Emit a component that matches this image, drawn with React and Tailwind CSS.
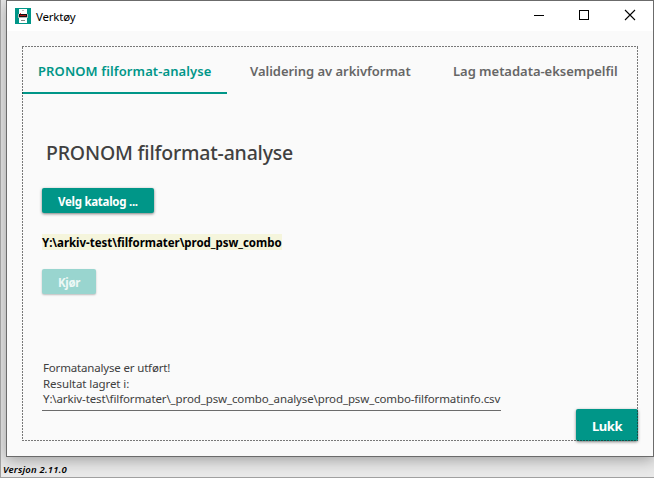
import React from 'react';

const tabs = [
  { label: 'PRONOM filformat-analyse', box: 'w-[205px] pl-4 text-[#009688] border-[#009688]', text: 'tracking-[0.1px]' },
  { label: 'Validering av arkivformat', box: 'w-[203px] pl-[23px] text-[#666666] border-transparent', text: 'tracking-[-0.03px]' },
  { label: 'Lag metadata-eksempelfil', box: 'w-[208px] pl-[23px] text-[#666666] border-transparent', text: 'tracking-[-0.03px]' },
];

function AppIcon() {
  return (
    <svg width="16" height="16" viewBox="0 0 16 16" shapeRendering="crispEdges">
      <rect width="16" height="16" fill="#009688" />
      <rect x="4" y="1" width="8" height="5" fill="#fff" />
      <rect x="7" y="2" width="2" height="1" fill="#bbb" />
      <rect x="5" y="5" width="1" height="1" fill="#e33" />
      <rect x="3" y="6" width="10" height="4" fill="#b9b9b9" />
      <rect x="4" y="6" width="8" height="3" fill="#111" />
      <rect x="5" y="7" width="6" height="1" fill="#b51616" />
      <rect x="4" y="10" width="8" height="5" fill="#fff" />
      <rect x="6" y="12" width="4" height="1" fill="#888" />
    </svg>
  );
}

function TitleBar() {
  return (
    <header className="flex h-[30px] shrink-0 items-center bg-white pl-2">
      <AppIcon />
      <span className="ml-[5px] pt-px text-[11.5px] leading-[16px] tracking-[-0.2px] text-black">Verktøy</span>
      <div className="ml-auto flex items-center text-black">
        <svg width="46" height="30" viewBox="0 0 46 30" shapeRendering="crispEdges">
          <path d="M19 14.5h10" stroke="currentColor" />
        </svg>
        <svg width="46" height="30" viewBox="0 0 46 30" shapeRendering="crispEdges">
          <rect x="18.5" y="9.5" width="9" height="9" fill="none" stroke="currentColor" />
        </svg>
        <svg width="46" height="30" viewBox="0 0 46 30">
          <path d="M18 9l10 10M28 9l-10 10" stroke="currentColor" strokeWidth="1.1" />
        </svg>
      </div>
    </header>
  );
}

export default function App() {
  return (
    <div className="flex h-[478px] w-[654px] flex-col overflow-hidden border-b border-l border-[#a0a0a0] bg-[#e9e9e9] pl-[5px] font-['Noto_Sans','Open_Sans',sans-serif]">
      <div className="flex h-[457px] w-[648px] shrink-0 flex-col border border-[#6b6b6b] bg-[#fafafa] shadow-[0_3px_14px_rgba(0,0,0,0.32)]">
        <TitleBar />
        <main className="relative mt-[15px] ml-[15px] flex h-[395px] w-[616px] flex-col">
          <nav className="flex h-[48px] shrink-0">
            {tabs.map((t) => (
              <div key={t.label} className={`${t.box} flex items-center border-b-2 pt-[4px]`}>
                <span className={`${t.text} text-[13px] leading-[20px] font-semibold whitespace-nowrap`}>{t.label}</span>
              </div>
            ))}
          </nav>
          <section className="flex shrink-0 flex-col items-start pl-5">
            <h1 className="mt-[45px] ml-1 text-[19.5px] leading-[28px] font-medium tracking-[-0.19px] whitespace-nowrap text-[#404040]">PRONOM filformat-analyse</h1>
            <button className="mt-[21px] h-[25px] w-[112px] rounded-[2px] bg-[#009688] pt-px pl-4 text-left text-[11.5px] leading-[26px] font-bold tracking-[-0.28px] whitespace-nowrap text-white shadow-[0_1px_3px_rgba(0,0,0,0.5)]">Velg katalog ...</button>
            <div className="mt-[21px] h-[16px] w-[240px] bg-[#f5f5dc] text-[11.5px] leading-[17px] font-bold tracking-[-0.04px] whitespace-nowrap text-black">Y:\arkiv-test\filformater\prod_psw_combo</div>
            <button className="mt-[19px] h-[25px] w-[54px] rounded-[2px] bg-[#99d5cf] pt-px pl-4 text-left text-[11.5px] leading-[26px] font-bold tracking-[-0.3px] text-[#edf8f6] shadow-[0_1px_2px_rgba(0,0,0,0.25)]">Kjør</button>
            <div className="mt-[66px] flex h-[51px] w-[459px] flex-col border-b border-[#6b6b6b] pl-px text-[11.5px] whitespace-nowrap text-[#404040]">
              <span className="leading-[16px] tracking-[-0.17px]">Formatanalyse er utført!</span>
              <span className="leading-[15px] tracking-[-0.08px]">Resultat lagret i:</span>
              <span className="leading-[16px] tracking-[-0.12px]">Y:\arkiv-test\filformater\_prod_psw_combo_analyse\prod_psw_combo-filformatinfo.csv</span>
            </div>
          </section>
          <button className="-mt-[2px] ml-auto h-[32px] w-[62px] shrink-0 rounded-[2px] bg-[#009688] pl-4 text-left text-[13px] leading-[34px] font-bold tracking-[-0.45px] text-white shadow-[0_1px_3px_rgba(0,0,0,0.5)]">Lukk</button>
          <div className="pointer-events-none absolute inset-0 flex flex-col justify-between opacity-60">
            <div className="h-px bg-[repeating-linear-gradient(90deg,#222_0_2px,transparent_2px_3px)]" />
            <div className="flex flex-1 justify-between">
              <div className="w-px bg-[repeating-linear-gradient(180deg,#222_0_2px,transparent_2px_3px)]" />
              <div className="w-px bg-[repeating-linear-gradient(180deg,#222_0_2px,transparent_2px_3px)]" />
            </div>
            <div className="h-px bg-[repeating-linear-gradient(90deg,#222_0_2px,transparent_2px_3px)]" />
          </div>
        </main>
      </div>
      <footer className="-ml-[3px] mt-[6px] text-[9.5px] leading-[14px] font-semibold tracking-[0.2px] text-black italic">Versjon 2.11.0</footer>
    </div>
  );
}
